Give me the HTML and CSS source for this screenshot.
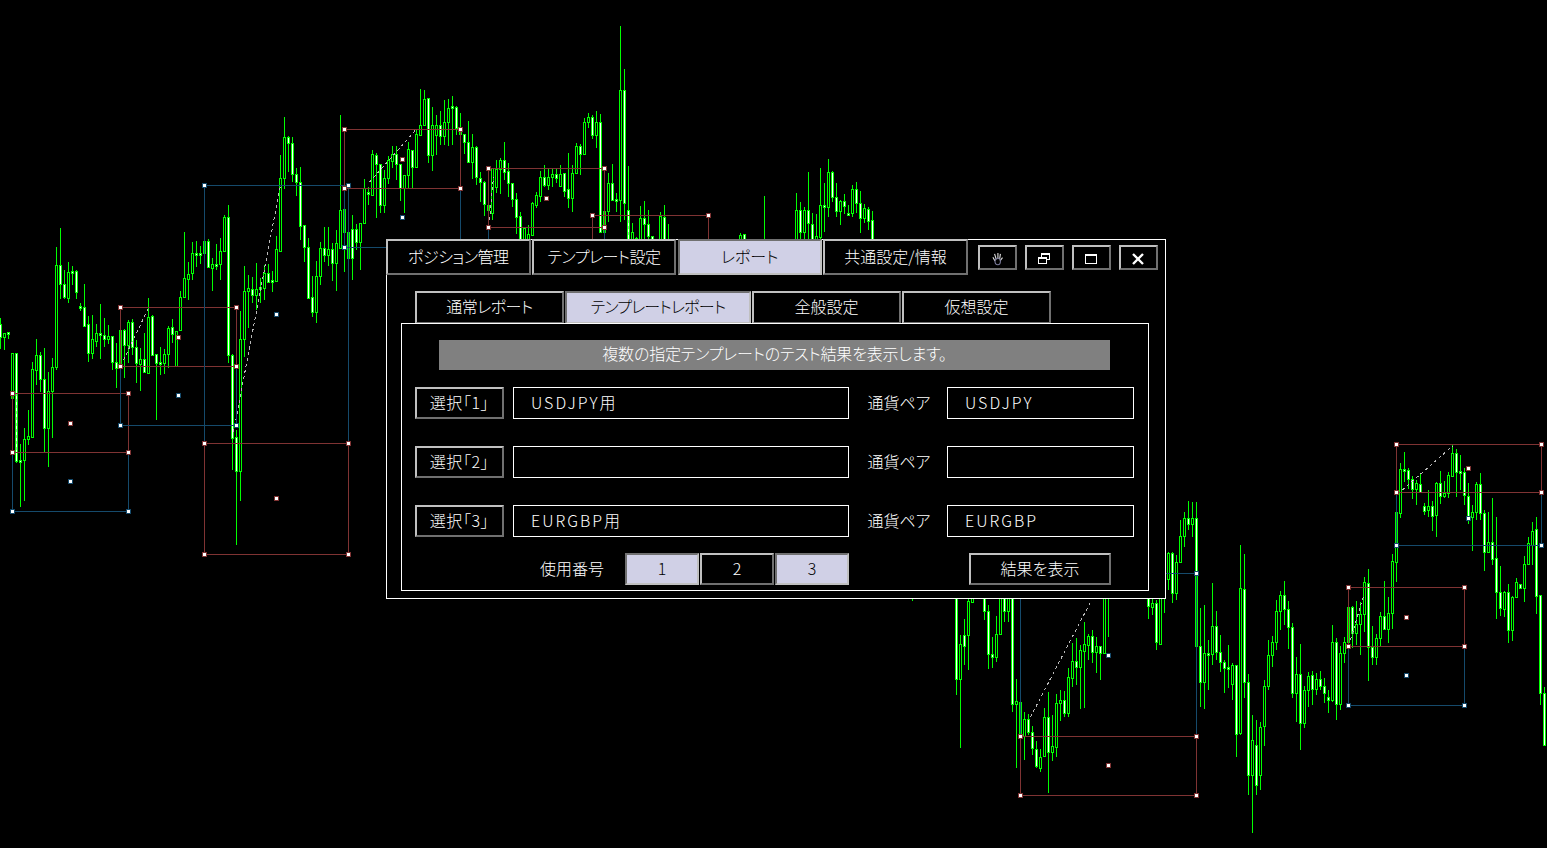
FILE: index.html
```html
<!DOCTYPE html>
<html lang="ja">
<head>
    <meta charset="UTF-8">
    <title>レポート</title>
    <link rel="stylesheet" href="styles.css">
</head>
<body>
    <svg class="chart" id="chart" width="1547" height="848" shape-rendering="crispEdges"></svg>

    <div class="panel">
        <div class="top-bar">
            <div class="tabs">
                <button class="tab kana">ポジション管理</button>
                <button class="tab kana">テンプレート設定</button>
                <button class="tab active">レポート</button>
                <button class="tab">共通設定/情報</button>
            </div>
            <div class="win-buttons">
                <button class="win-btn">
                    <svg width="15" height="15" viewBox="0 0 18 18" fill="none" stroke="#e4e4e4" stroke-width="1.300">
                        <path d="M6 12 3.500 7.500M7.500 10 5.500 3.500M9.500 9.500V2.500M11.500 10l1-6.500M12 12l3-4"/>
                        <path d="M6 12c0 3 1.500 4.500 3.500 4.500s3-1.500 3-4.500-1-3-3-3-3.500 1-3.500 3z" stroke="#7a7a9a"/>
                    </svg>
                </button>
                <button class="win-btn">
                    <svg width="14" height="12" viewBox="0 0 14 12" fill="none" stroke="#fff" shape-rendering="crispEdges">
                        <path d="M4.500 4V1.500h8v5H9"/>
                        <path d="M4 1h9" stroke-width="2"/>
                        <rect x="1.500" y="5.500" width="8" height="5"/>
                        <path d="M1 5h9" stroke-width="2"/>
                    </svg>
                </button>
                <button class="win-btn">
                    <svg width="14" height="12" viewBox="0 0 14 12" fill="none" stroke="#fff" shape-rendering="crispEdges">
                        <rect x="1.500" y="1.500" width="11" height="9"/>
                        <path d="M1 1.500h12" stroke-width="2"/>
                    </svg>
                </button>
                <button class="win-btn">
                    <svg width="14" height="14" viewBox="0 0 14 14" fill="none" stroke="#fff" stroke-width="2.400">
                        <path d="M2 2l10 10M12 2 2 12"/>
                    </svg>
                </button>
            </div>
        </div>

        <div class="sub-tabs">
            <button class="tab sub kana">通常レポート</button>
            <button class="tab sub wide active">テンプレートレポート</button>
            <button class="tab sub">全般設定</button>
            <button class="tab sub">仮想設定</button>
        </div>

        <div class="content">
            <p class="banner">複数の指定テンプレートのテスト結果を表示します。</p>

            <div class="row">
                <button class="bevel select">選択「1」</button>
                <div class="field name">USDJPY用</div>
                <span class="pair-label">通貨ペア</span>
                <div class="field pair">USDJPY</div>
            </div>
            <div class="row">
                <button class="bevel select">選択「2」</button>
                <div class="field name"></div>
                <span class="pair-label">通貨ペア</span>
                <div class="field pair"></div>
            </div>
            <div class="row">
                <button class="bevel select">選択「3」</button>
                <div class="field name">EURGBP用</div>
                <span class="pair-label">通貨ペア</span>
                <div class="field pair">EURGBP</div>
            </div>

            <div class="row last">
                <span class="num-label">使用番号</span>
                <div class="nums">
                    <button class="bevel num active">1</button>
                    <button class="bevel num">2</button>
                    <button class="bevel num active">3</button>
                </div>
                <button class="bevel show">結果を表示</button>
            </div>
        </div>
    </div>

    <script src="chart.js"></script>
</body>
</html>
```

FILE: styles.css
```css
* {
    box-sizing: border-box;
}

body {
    margin: 0;
    width: 1547px;
    height: 848px;
    overflow: hidden;
    background: #000;
    color: #fff;
    font-family: "Noto Sans CJK JP", sans-serif;
    font-size: 16px;
    font-weight: 300;
    font-feature-settings: "palt";
}

.chart {
    position: absolute;
    left: 0;
    top: 0;
}

/* window floating over the chart */
.panel {
    position: absolute;
    left: 386px;
    top: 239px;
    width: 780px;
    height: 360px;
    background: #000;
    border: 1px solid #fff;
}

button {
    font: inherit;
    font-feature-settings: inherit;
    color: inherit;
    padding: 0 0 3px;
    background: #000;
}

.tab,
.bevel,
.win-btn {
    display: flex;
    align-items: center;
    justify-content: center;
    border: 2px solid;
    border-color: #c0c0c0 #707070 #707070 #c0c0c0;
}

.tab.active,
.bevel.active {
    background: #d0d0e6;
    color: #000;
    border-color: #707070 #c0c0c0 #c0c0c0 #707070;
}

.top-bar {
    display: flex;
    margin: -1px 0 0 -1px;
}

.tabs {
    display: flex;
    gap: 1.25px;
}

.tab {
    width: 144.500px;
    height: 36px;
}

.tab.kana {
    letter-spacing: -0.500px;
}

.win-buttons {
    display: flex;
    gap: 8px;
    margin: 6px 0 0 10px;
}

.win-btn {
    width: 39px;
    height: 25px;
    padding: 2px 0 0;
}

.sub-tabs {
    display: flex;
    gap: 1px;
    margin: 16px 0 0 28px;
}

.tab.sub {
    width: 149px;
    height: 33px;
}

.tab.sub.wide {
    width: 186px;
    letter-spacing: -0.800px;
}

.content {
    width: 748px;
    height: 268px;
    margin: -1px 0 0 14px;
    padding: 16px 0 0 13px;
    position: relative;
    border: 1px solid #fff;
}

.banner {
    width: 671px;
    height: 30px;
    margin: 0 0 17px 24px;
    background: #808080;
    text-align: center;
    line-height: 27px;
    letter-spacing: -0.200px;
}

.row {
    display: flex;
    align-items: center;
    height: 32px;
    margin-bottom: 27px;
}

.row.last {
    margin: -11px 0 0;
}

.select {
    width: 89px;
    height: 32px;
    margin-right: 9px;
    letter-spacing: 0.600px;
}

.field {
    height: 32px;
    padding-left: 17px;
    border: 1px solid #fff;
    line-height: 29px;
    letter-spacing: 2px;
}

.name {
    width: 336px;
}

.pair {
    width: 187px;
}

.pair-label {
    width: 98px;
    padding: 0 0 3px 2px;
    text-align: center;
}

.num-label {
    width: 210px;
    padding: 0 21px 3px 0;
    text-align: right;
}

.nums {
    display: flex;
    gap: 1px;
}

.num {
    width: 74px;
    height: 32px;
}

.show {
    width: 142px;
    height: 32px;
    margin-left: 120px;
}
```

FILE: chart.js
```js
const svg = document.getElementById('chart');

// x, high, low, bodyTop, bodyBottom, white
const candles = [
  [0,318,349,324,337,1],[4,333,350,333,337,0],[8,332,339,332,334,1],[12,353,398,353,398,0],
  [16,353,463,353,461,1],[20,444,507,460,462,1],[24,428,501,439,460,0],[28,410,445,436,439,0],
  [32,362,437,369,437,0],[36,339,385,355,370,0],[40,352,392,355,379,1],[44,348,452,379,428,1],
  [48,372,467,391,428,0],[52,358,438,367,391,0],[56,247,370,265,367,0],[60,228,299,265,284,1],
  [64,270,299,284,297,1],[68,262,303,272,298,0],[72,266,285,271,273,1],[76,270,299,271,292,1],
  [80,303,311,306,308,1],[84,284,326,307,326,1],[88,316,362,324,353,1],[92,315,359,339,353,0],
  [96,324,347,333,341,0],[100,304,359,333,335,1],[104,318,347,335,339,1],[108,325,344,336,339,0],
  [112,336,370,336,362,1],[116,343,388,362,368,1],[120,325,370,330,367,0],[124,329,378,330,345,1],
  [128,320,363,322,345,0],[132,319,355,322,347,1],[136,340,383,347,363,1],[140,348,391,359,364,0],
  [144,333,372,359,372,1],[148,298,373,317,373,0],[152,315,355,316,355,1],[156,354,420,354,363,1],
  [160,347,375,362,364,1],[164,349,374,354,363,0],[168,326,368,328,354,0],[172,319,343,327,334,1],
  [176,331,366,331,366,0],[180,291,331,297,330,0],[184,232,297,278,297,0],[188,262,300,274,279,0],
  [192,242,280,253,273,0],[196,241,267,253,255,1],[200,246,264,253,255,1],[204,235,253,241,253,0],
  [208,239,268,241,267,1],[212,258,291,264,268,0],[216,244,270,264,266,1],[220,238,280,251,264,0],
  [224,215,251,217,251,0],[228,205,363,217,355,1],[232,354,470,355,438,1],[236,430,545,437,471,1],
  [240,311,501,339,471,0],[244,266,357,291,339,0],[248,275,328,288,291,0],[252,277,303,289,295,1],
  [256,263,310,289,295,0],[260,278,303,287,289,0],[264,265,300,273,288,0],[268,264,282,273,282,1],
  [272,271,292,280,282,1],[276,236,281,249,281,0],[280,155,251,178,251,0],[284,117,189,137,178,0],
  [288,136,172,137,143,1],[292,137,182,143,174,1],[296,168,196,174,182,1],[300,167,240,182,226,1],
  [304,225,262,225,247,1],[308,238,298,247,298,1],[312,276,317,297,312,1],[316,261,323,276,312,0],
  [320,242,285,248,276,0],[324,227,262,248,255,1],[328,227,266,249,255,0],[332,243,281,249,263,1],
  [336,230,291,243,263,0],[340,115,248,210,248,0],[344,190,272,209,232,0],[348,230,280,232,258,0],
  [352,215,280,229,258,1],[356,224,250,229,242,1],[360,223,270,223,242,0],[364,179,223,188,223,0],
  [368,187,205,192,194,1],[372,150,193,154,195,0],[376,153,218,155,164,1],[380,164,213,164,205,1],
  [384,170,213,178,205,0],[388,156,184,160,178,0],[392,146,168,154,161,0],[396,146,180,154,164,1],
  [400,164,201,164,188,1],[404,175,213,175,188,0],[408,142,188,149,175,0],[412,150,188,150,167,1],
  [416,130,167,134,167,0],[420,89,135,125,135,0],[424,90,125,99,125,0],[428,98,163,98,155,1],
  [432,107,171,125,155,0],[436,115,155,125,135,0],[440,111,145,125,136,1],[444,100,145,122,136,0],
  [448,99,146,108,122,0],[452,96,145,106,108,1],[456,106,135,107,128,1],[460,113,135,128,134,0],
  [464,134,154,134,142,1],[468,121,163,142,162,1],[472,134,179,147,162,0],[476,146,185,147,177,1],
  [480,172,202,178,182,1],[484,181,216,182,204,1],[488,190,218,205,210,0],[492,168,220,168,213,0],
  [496,160,193,169,187,0],[500,158,194,160,169,0],[504,142,180,160,172,1],[508,163,197,171,183,1],
  [512,183,207,183,199,1],[516,193,234,199,217,1],[520,212,240,216,240,1],[524,228,240,228,240,0],
  [528,225,240,234,240,0],[532,202,236,203,235,0],[536,192,208,195,205,0],[540,171,202,177,196,0],
  [544,165,187,177,185,1],[548,168,190,177,185,0],[552,169,187,174,177,0],[556,168,183,174,178,1],
  [560,165,186,174,186,0],[564,173,197,173,191,1],[568,153,208,189,198,1],[572,165,212,173,198,0],
  [576,143,173,146,173,0],[580,144,175,146,154,1],[584,118,154,122,154,0],[588,113,128,117,122,0],
  [592,115,139,117,135,1],[596,111,148,122,135,0],[600,114,233,122,232,1],[604,211,233,211,232,0],
  [608,173,222,183,211,0],[612,164,200,183,200,1],[616,193,212,199,201,1],[620,26,222,90,200,0],
  [624,69,220,90,203,1],[628,166,240,210,240,1],[632,223,240,232,240,0],[636,237,240,238,240,0],
  [640,206,240,218,240,0],[644,201,240,218,224,1],[648,210,240,224,236,1],[652,236,240,236,240,1],
  [660,212,240,216,240,0],[664,205,240,217,240,1],[668,224,240,239,240,0],
  [740,233,240,235,240,0],[744,234,240,234,240,1],[764,196,240,239,240,0],
  [796,193,240,210,240,0],[800,202,240,210,232,1],[804,207,240,210,232,0],[808,172,240,210,223,1],
  [812,213,240,224,240,1],[816,214,240,236,240,0],[820,168,240,205,237,0],[824,183,232,205,207,1],
  [828,159,217,172,207,0],[832,171,202,172,197,1],[836,183,217,197,211,1],[840,200,225,201,211,0],
  [844,194,214,201,206,1],[848,205,216,213,215,1],[852,185,217,189,213,0],[856,182,213,189,203,1],
  [860,191,233,203,218,1],[864,204,223,208,218,0],[868,207,230,209,221,1],[872,211,240,220,240,1],
  [912,590,601,595,597,0],
  [956,590,695,590,679,1],[960,635,748,644,679,0],[964,619,665,635,646,1],[968,598,670,601,635,0],
  [972,596,603,598,602,0],[984,590,620,590,611,1],[988,605,669,611,654,1],[992,637,668,654,657,1],
  [996,616,662,634,657,0],[1000,590,634,590,634,0],[1004,590,622,590,611,1],[1008,590,622,590,611,0],
  [1012,590,712,590,704,1],[1016,679,768,701,704,0],[1020,702,740,702,737,0],[1024,712,760,719,736,0],
  [1028,714,735,719,732,1],[1032,726,755,732,748,1],[1036,741,768,749,766,1],[1040,749,772,757,768,0],
  [1044,708,757,717,756,0],[1048,692,793,717,752,1],[1052,715,761,746,752,0],[1056,694,757,703,747,0],
  [1060,690,721,700,703,0],[1064,691,717,700,713,1],[1068,668,717,677,713,0],[1072,643,687,661,678,0],
  [1076,638,685,661,667,1],[1080,645,709,650,667,0],[1084,622,708,644,651,0],[1088,634,660,636,645,0],
  [1092,630,663,636,652,1],[1096,637,673,646,652,0],[1100,646,680,646,653,1],[1104,590,653,590,653,0],
  [1108,590,637,596,598,0],[1148,590,619,590,606,1],[1152,598,615,603,607,0],[1156,600,650,603,642,1],
  [1160,590,644,590,644,0],[1164,590,613,590,592,0],[1168,552,590,553,579,0],[1172,552,603,553,593,1],
  [1176,555,600,562,593,0],[1180,520,547,536,562,0],[1184,512,547,518,536,0],[1188,501,530,518,524,1],
  [1192,502,537,518,524,0],[1196,502,650,518,646,1],[1200,608,707,646,682,1],[1204,605,709,653,682,0],
  [1208,640,690,653,655,1],[1212,583,665,626,654,0],[1216,611,660,626,652,1],[1220,635,672,652,662,1],
  [1224,660,693,662,668,1],[1228,645,688,667,669,1],[1232,663,700,665,684,0],[1236,665,757,665,734,1],
  [1240,545,735,588,733,0],[1244,554,698,589,682,1],[1248,674,795,682,775,1],[1252,715,833,740,775,0],
  [1256,720,795,745,785,1],[1260,722,790,727,775,0],[1264,680,746,686,726,0],[1268,640,690,655,686,0],
  [1272,636,667,642,655,0],[1276,600,650,611,642,0],[1280,591,630,595,611,0],[1284,581,625,595,609,1],
  [1288,601,649,609,627,1],[1292,623,698,627,693,1],[1296,657,722,674,693,0],[1300,644,750,674,723,1],
  [1304,686,728,690,723,0],[1308,672,707,676,690,0],[1312,671,705,675,689,1],[1316,673,695,679,689,0],
  [1320,671,690,679,686,1],[1324,678,703,686,693,1],[1328,690,713,697,700,1],[1332,625,702,642,700,0],
  [1336,638,720,642,704,1],[1340,646,710,653,704,0],[1344,637,663,642,653,0],[1348,600,645,607,642,0],
  [1352,606,648,607,633,1],[1356,601,645,624,633,0],[1360,602,655,614,624,0],[1364,577,632,582,614,0],
  [1368,569,681,583,647,1],[1372,626,665,647,657,1],[1376,634,665,638,657,0],[1380,612,647,616,638,0],
  [1384,581,628,616,629,1],[1388,597,643,613,629,0],[1392,554,629,561,613,0],[1396,512,582,512,562,0],
  [1400,463,518,469,513,0],[1404,452,482,469,471,1],[1408,468,489,470,479,1],[1412,476,499,479,489,1],
  [1416,480,505,483,489,0],[1420,474,492,484,492,1],[1424,503,515,506,511,1],[1428,490,517,506,510,0],
  [1432,501,531,506,516,1],[1436,482,537,483,515,0],[1440,471,504,483,496,1],[1444,481,498,493,496,0],
  [1448,472,498,475,493,0],[1452,445,477,453,476,0],[1456,449,497,453,472,1],[1460,455,490,471,473,1],
  [1464,468,505,472,495,1],[1468,483,524,496,516,1],[1472,505,551,512,517,0],[1476,482,520,484,512,0],
  [1480,473,520,484,513,1],[1484,510,571,513,552,1],[1488,512,552,542,552,0],[1492,498,565,542,559,1],
  [1496,517,619,558,592,1],[1500,566,616,592,608,1],[1504,591,617,592,609,0],[1508,584,643,592,630,1],
  [1512,596,641,597,630,0],[1516,578,598,582,597,0],[1520,584,588,584,588,1],[1524,556,602,564,588,0],
  [1528,537,565,543,564,0],[1532,522,565,531,545,0],[1536,517,614,529,596,1],[1540,595,705,595,693,1],
  [1544,687,745,693,745,1]
];

const RED = '#7f3333';
const BLUE = '#154a6b';

// x1, y1, x2, y2, colour, centre handle x, y
const boxes = [
  [12,452,128,511,BLUE,70,481],[12,393,128,452,RED,70,423],
  [120,366,236,425,BLUE,178,395],[120,307,236,366,RED,178,337],
  [204,185,348,443,BLUE,276,314],[204,443,348,554,RED,276,498],
  [344,188,460,247,BLUE,402,217],[344,129,460,188,RED,402,159],
  [488,227,604,286,BLUE,546,257],[488,168,604,227,RED,546,198],
  [592,215,708,274,RED,650,245],
  [1020,573,1196,736,BLUE,1108,655],[1020,736,1196,795,RED,1108,765],
  [1396,492,1541,545,BLUE,1468,518],[1396,444,1541,492,RED,1468,468],
  [1348,646,1464,705,BLUE,1406,675],[1348,587,1464,646,RED,1406,617]
];

const dashes = [
  [16,393,16,452],[123,360,148,308],[233,432,280,185],[369,182,416,129],
  [489,220,493,177],[628,220,628,237],[1030,717,1090,602],[1402,490,1452,446],[1350,640,1363,596]
];

function rect(x, y, w, h, fill) {
  const r = document.createElementNS('http://www.w3.org/2000/svg', 'rect');
  r.setAttribute('x', x);
  r.setAttribute('y', y);
  r.setAttribute('width', w);
  r.setAttribute('height', h);
  r.setAttribute('fill', fill);
  svg.appendChild(r);
}

function handle(x, y, colour) {
  rect(x - 2, y - 2, 5, 5, colour);
  rect(x - 1, y - 1, 3, 3, '#fff');
}

candles.forEach(([x, high, low, top, bottom, white]) => {
  rect(x, high, 1, low - high, '#00ff00');
  rect(x - 1, top, 3, bottom - top + 1, '#00ff00');
  if (bottom - top > 1) {
    rect(x, top + 1, 1, bottom - top - 1, white ? '#fff' : '#000');
  }
});

dashes.forEach(([x1, y1, x2, y2]) => {
  const l = document.createElementNS('http://www.w3.org/2000/svg', 'line');
  l.setAttribute('x1', x1 + 0.5);
  l.setAttribute('y1', y1);
  l.setAttribute('x2', x2 + 0.5);
  l.setAttribute('y2', y2);
  l.setAttribute('stroke', '#b8b8b8');
  l.setAttribute('stroke-dasharray', '3 3');
  svg.appendChild(l);
});

boxes.forEach(([x1, y1, x2, y2, colour]) => {
  rect(x1, y1, x2 - x1 + 1, 1, colour);
  rect(x1, y2, x2 - x1 + 1, 1, colour);
  rect(x1, y1, 1, y2 - y1, colour);
  rect(x2, y1, 1, y2 - y1, colour);
});

boxes.forEach(([x1, y1, x2, y2, colour, cx, cy]) => {
  handle(x1, y1, colour);
  handle(x2, y1, colour);
  handle(x1, y2, colour);
  handle(x2, y2, colour);
  handle(cx, cy, colour);
});
```
